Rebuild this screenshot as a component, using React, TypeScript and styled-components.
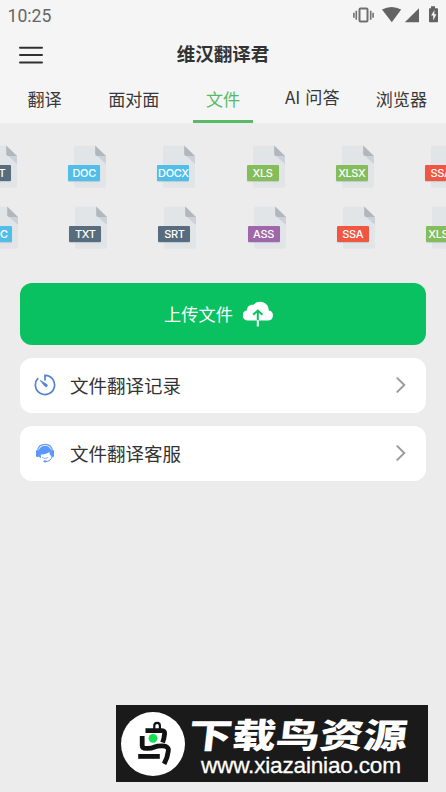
import React from "react";
import styled, { createGlobalStyle } from "styled-components";

const Global = createGlobalStyle`
  * { box-sizing: border-box; }
  html, body { margin: 0; padding: 0; background: #ececec; }
  body { font-family: Roboto, "Noto Sans CJK SC", sans-serif; color: #333; overflow: hidden; }
  svg { display: block; flex: none; }
`;

const Screen = styled.div`
  width: 446px;
  height: 792px;
  background: #ececec;
  display: flex;
  flex-direction: column;
  overflow: hidden;
`;

const Header = styled.header`
  height: 122.6px;
  flex: none;
  background: #f5f5f5;
`;

const StatusBar = styled.div`
  height: 30px;
  display: flex;
  justify-content: space-between;
  padding-left: 7.5px;
`;

const Clock = styled.span`
  font: 400 17.6px/32px Roboto, sans-serif;
  color: #666;
`;

const TitleBar = styled.div`
  height: 48px;
  display: grid;
  grid-template-columns: 60px 1fr 60px;
  align-items: center;
`;

const MenuButton = styled.button`
  border: 0;
  padding: 1px 0 0 19px;
  background: none;
`;

const Title = styled.h1`
  margin: 0;
  padding-bottom: 2px;
  text-align: center;
  font: 700 18.5px/28px "Noto Sans CJK SC", sans-serif;
  color: #333;
`;

const Tabs = styled.nav`
  height: 44.6px;
  display: grid;
  grid-template-columns: repeat(5, 1fr);
`;

const Tab = styled.div<{ $active?: boolean; $lift?: boolean }>`
  display: flex;
  flex-direction: column;
  align-items: center;
  justify-content: space-between;
  padding-top: ${(p) => (p.$lift ? 5.9 : 8.4)}px;
  font: 400 17.1px/25px "Noto Sans CJK SC", sans-serif;
  word-spacing: 1.2px;
  white-space: nowrap;
  color: ${(p) => (p.$active ? "#55bb66" : "#383838")};
`;

const Underline = styled.span`
  width: 60px;
  height: 2.6px;
  background: #55bb66;
`;

const Formats = styled.section`
  height: 160.6px;
  flex: none;
  padding-top: 22.4px;
  overflow: hidden;
`;

const FormatRow = styled.div<{ $offset: number }>`
  display: flex;
  width: 540px;
  height: 60.8px;
  margin-left: ${(p) => p.$offset}px;
`;

const FileIcon = styled.div`
  position: relative;
  width: 89.2px;
  flex: none;
`;

const Badge = styled.span<{ $color: string }>`
  position: absolute;
  left: 0;
  top: 20px;
  width: 32px;
  height: 16px;
  border-radius: 1px;
  background: ${(p) => p.$color};
  box-shadow: 0 1px 1px rgba(120, 140, 155, 0.3);
  color: #fff;
  font: 500 11px/16.6px Inter, sans-serif;
  letter-spacing: -0.35px;
  display: flex;
  justify-content: center;
`;

const Actions = styled.main`
  display: flex;
  flex-direction: column;
  gap: 12.6px;
  padding: 0 20px;
`;

const Upload = styled.button`
  height: 62px;
  border: 0;
  border-radius: 12px;
  background: #09c160;
  color: #fff;
  display: flex;
  align-items: center;
  justify-content: center;
  gap: 10px;
  padding: 0 9px 1px 0;
  font: 400 17.2px/26px "Noto Sans CJK SC", sans-serif;
`;

const Item = styled.div`
  height: 55.5px;
  border-radius: 12px;
  background: #fff;
  display: grid;
  grid-template-columns: 36px 1fr auto;
  align-items: center;
  padding: 0 20px 2px 14px;
  font: 400 18.5px/28px "Noto Sans CJK SC", sans-serif;
`;

const Banner = styled.footer`
  width: 312px;
  height: 77px;
  margin: auto 0 10px 116px;
  background: #1a1a1a;
  display: flex;
  padding: 1px 0 0 5px;
  align-items: center;
  color: #fff;
`;

const BannerCopy = styled.div`
  display: flex;
  flex-direction: column;
  padding: 4px 0 0 4px;
  width: 240px;
`;

const Brand = styled.div`
  height: 40px;
  width: 200px;
  white-space: nowrap;
  transform: scaleX(1.28) skewX(-5deg);
  transform-origin: left center;
  font: 900 34.2px/42px "Noto Sans CJK SC", sans-serif;
`;

const Url = styled.div`
  height: 28px;
  padding-left: 12px;
  font: 400 22.6px/28px "Liberation Sans", sans-serif;
  letter-spacing: -0.2px;
  white-space: nowrap;
  -webkit-text-stroke: 0.3px #fff;
`;

const colors: Record<string, string> = {
  DOC: "#50bee8",
  DOCX: "#50bee8",
  XLS: "#84bd5a",
  XLSX: "#84bd5a",
  SSA: "#f15642",
  TXT: "#576d7e",
  SRT: "#576d7e",
  ASS: "#a066aa",
};

function FileFormat({ name }: { name: string }) {
  return (
    <FileIcon>
      <svg width="40" height="44" viewBox="0 0 40 44">
        <path d="M8 .4h19.3L38 11v29.8a2 2 0 0 1-2 2H8a2 2 0 0 1-2-2V2.4a2 2 0 0 1 2-2Z" fill="#e1e5e8" />
        <path d="M29 10.8 38 19v-8.2Z" fill="#cad1d9" />
        <path d="M27.2.4 38 11h-8.8a2 2 0 0 1-2-2Z" fill="#b0b7bd" />
      </svg>
      <Badge $color={colors[name]}>{name}</Badge>
    </FileIcon>
  );
}

const StatusIcons = () => (
  <svg width="101" height="30" viewBox="0 0 101 30" fill="#636363">
    <rect x="14.5" y="8.5" width="8" height="13" rx="1" fill="none" stroke="#707070" strokeWidth="2" />
    <path d="M11.3 10.5v9M25.7 10.5v9M8.9 12.5v5M28.1 12.5v5" stroke="#707070" strokeWidth="1.6" fill="none" transform="translate(0 .2)" />
    <path d="M37 9.6Q46.5 4.5 56.2 9.6L46.8 22.2Z" />
    <path d="M59.8 22.2H74V8.3Z" />
    <path d="M86 6.2h4v2h2.2q.8 0 .8.8v12.4q0 .8-.8.8h-7.4q-.8 0-.8-.8V9q0-.8.8-.8H86Z" />
    <path d="m89.5 10-3.4 5.6h2.1v4.8l3.2-6.1h-2.1Z" fill="#f5f5f5" />
  </svg>
);

const MenuIcon = () => (
  <svg width="24" height="18" viewBox="0 0 24 18" stroke="#303030" strokeWidth="2" strokeLinecap="round">
    <path d="M1 1.8h22M1 9.1h22M1 16.4h22" />
  </svg>
);

const CloudIcon = () => (
  <svg width="30" height="26" viewBox="0 0 30 26">
    <path d="M5.3 19.5A5.2 5.2 0 0 1 3.9 9.2C3.9 5.4 7.3 3 10.5 3.8 12.2 1.6 14.5.7 17.1.7c5 0 8.7 3.8 8.7 8.7a5.1 5.1 0 0 1-1 10.1Z" fill="#fff" />
    <path d="M14.8 19.5V9.8M10.2 13.7l4.6-4.1 4.6 4.1" fill="none" stroke="#09c160" strokeWidth="2" />
    <path d="M14.8 19.3v6.2" stroke="#fff" strokeWidth="2" />
  </svg>
);

const TimerIcon = () => (
  <svg width="22" height="22" viewBox="0 0 22 22">
    <path d="M4.2 4.1A9.6 9.6 0 1 0 11 1.3v5.1" fill="none" stroke="#5481d4" strokeWidth="1.7" />
    <path d="m6.2 6.4 6.8 4.1a1.4 1.4 0 0 1-1.8 2.1Z" fill="#5481d4" stroke="#5481d4" strokeWidth=".8" />
  </svg>
);

const SupportIcon = () => (
  <svg width="22" height="22" viewBox="0 0 22 22">
    <path d="M3.6 9C4 4.5 7 2.3 11 2.3S18 4.5 18.4 9" fill="none" stroke="#649cf4" strokeWidth="1.2" />
    <rect x="2" y="8" width="3" height="7" rx="1.2" fill="#5b98fa" />
    <rect x="17" y="8" width="3" height="7" rx="1.2" fill="#5b98fa" />
    <path d="M4.2 11.5C4.2 7 7 3.8 11 3.8s6.8 3.2 6.8 7.7l-1.7 2.2-.7-3.6c-2.5 1.8-5.4 2.8-8.6 2.4L7 16.5c-1.7-1-2.8-2.8-2.8-5Z" fill="#5b98fa" />
    <path d="M18.3 14.5c-.8 3-3.3 5-6.8 5.2" fill="none" stroke="#649cf4" strokeWidth="1" />
    <path d="M8 15.5q3 2 6 0" fill="none" stroke="#649cf4" strokeWidth=".8" />
    <ellipse cx="11" cy="19.3" rx="1.7" ry="1.1" fill="#5b98fa" />
  </svg>
);

const Chevron = () => (
  <svg width="10" height="16" viewBox="0 0 10 16">
    <path d="m1.3 1.1 7 6.9-7 6.9" fill="none" stroke="#999" strokeWidth="1.9" strokeLinecap="round" />
  </svg>
);

const BirdLogo = () => (
  <svg width="64" height="64" viewBox="0 0 64 64">
    <circle cx="32" cy="32" r="32" fill="#fff" />
    <g fill="none" stroke="#111" strokeWidth="4.8">
      <path d="M24.5 18.6H41q3 0 2.6 3.2-.4 4.5-2 8.7" />
      <path d="M21.2 24v9.5q0 2.9 4 2.9 5 .2 8.4-1.4 3.1-1.4 8-1.2 6.3.3 5.7 5.2-.7 6.5-4.2 12.8" />
      <path d="M17.2 44.4h21.6" />
      <path d="M33.3 17.5v-3.8q0-2.8 2.8-2.8t2.8 2.8v3.8" strokeWidth="2.2" />
    </g>
    <circle cx="32" cy="26.3" r="4.4" fill="#13e052" />
  </svg>
);

const rowOne = ["TXT", "DOC", "DOCX", "XLS", "XLSX", "SSA"];
const rowTwo = ["DOC", "TXT", "SRT", "ASS", "SSA", "XLSX"];

export default function App() {
  return (
    <>
      <Global />
      <Screen>
        <Header>
          <StatusBar>
            <Clock>10:25</Clock>
            <StatusIcons />
          </StatusBar>
          <TitleBar>
            <MenuButton aria-label="菜单"><MenuIcon /></MenuButton>
            <Title>维汉翻译君</Title>
          </TitleBar>
          <Tabs>
            <Tab>翻译</Tab>
            <Tab>面对面</Tab>
            <Tab $active>文件<Underline /></Tab>
            <Tab $lift>AI 问答</Tab>
            <Tab>浏览器</Tab>
          </Tabs>
        </Header>
        <Formats>
          <FormatRow $offset={-21}>
            {rowOne.map((n) => <FileFormat key={n} name={n} />)}
          </FormatRow>
          <FormatRow $offset={-20}>
            {rowTwo.map((n) => <FileFormat key={n} name={n} />)}
          </FormatRow>
        </Formats>
        <Actions>
          <Upload>上传文件<CloudIcon /></Upload>
          <Item><TimerIcon /><span>文件翻译记录</span><Chevron /></Item>
          <Item><SupportIcon /><span>文件翻译客服</span><Chevron /></Item>
        </Actions>
        <Banner>
          <BirdLogo />
          <BannerCopy>
            <Brand>下载鸟资源</Brand>
            <Url>www.xiazainiao.com</Url>
          </BannerCopy>
        </Banner>
      </Screen>
    </>
  );
}
